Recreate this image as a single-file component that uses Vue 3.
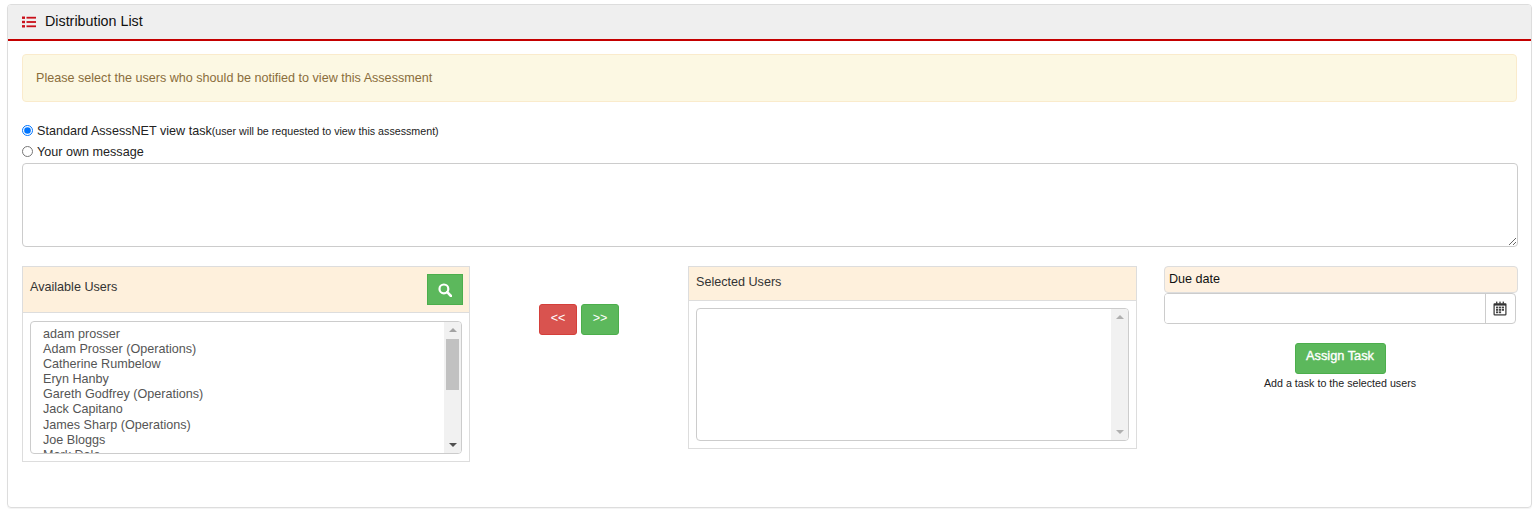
<script setup>
const users = [
  'adam prosser',
  'Adam Prosser (Operations)',
  'Catherine Rumbelow',
  'Eryn Hanby',
  'Gareth Godfrey (Operations)',
  'Jack Capitano',
  'James Sharp (Operations)',
  'Joe Bloggs',
  'Mark Dale'
]
</script>

<template>
  <div class="page">
    <section class="card">
      <header class="card-head">
        <svg class="list-icon" width="14" height="12" viewBox="0 0 14 12">
          <g fill="#c9101a">
            <rect x="0" y="0.5" width="3" height="2.4" />
            <rect x="0" y="4.8" width="3" height="2.4" />
            <rect x="0" y="9.1" width="3" height="2.4" />
            <rect x="4.5" y="0.8" width="9.5" height="1.8" />
            <rect x="4.5" y="5.1" width="9.5" height="1.8" />
            <rect x="4.5" y="9.4" width="9.5" height="1.8" />
          </g>
        </svg>
        <span class="card-title">Distribution List</span>
      </header>

      <div class="card-body">
        <div class="alert">Please select the users who should be notified to view this Assessment</div>

        <label class="radio-row first">
          <input type="radio" name="msg" checked />
          <span>Standard AssessNET view task</span><small>(user will be requested to view this assessment)</small>
        </label>
        <label class="radio-row">
          <input type="radio" name="msg" />
          <span>Your own message</span>
        </label>
        <textarea class="message"></textarea>

        <div class="columns">
          <div class="panel">
            <div class="panel-head tall">
              <span class="panel-title">Available Users</span>
              <button class="search-btn" type="button" aria-label="Search">
                <svg width="14" height="14" viewBox="0 0 14 14" fill="none" stroke="#fff">
                  <circle cx="5.9" cy="5.9" r="4.4" stroke-width="2.2" />
                  <path d="M9.2 9.2 13 13" stroke-width="2.6" stroke-linecap="round" />
                </svg>
              </button>
            </div>
            <div class="panel-body">
              <div class="listbox">
                <ul class="options">
                  <li v-for="u in users" :key="u">{{ u }}</li>
                </ul>
                <div class="scrollbar">
                  <i class="arrow up dark"></i>
                  <b class="thumb"></b>
                  <i class="arrow down darker"></i>
                </div>
              </div>
            </div>
          </div>

          <div class="movers">
            <button class="move red" type="button">&lt;&lt;</button>
            <button class="move green" type="button">&gt;&gt;</button>
          </div>

          <div class="panel">
            <div class="panel-head short">
              <span class="panel-title">Selected Users</span>
            </div>
            <div class="panel-body">
              <div class="listbox">
                <ul class="options"></ul>
                <div class="scrollbar">
                  <i class="arrow up"></i>
                  <i class="arrow down"></i>
                </div>
              </div>
            </div>
          </div>

          <div class="due">
            <div class="due-label">Due date</div>
            <div class="due-input">
              <input type="text" />
              <span class="addon">
                <svg width="14" height="15" viewBox="0 0 14 15">
                  <path d="M1.5 2.2h11a1 1 0 0 1 1 1v10a1.3 1.3 0 0 1-1.3 1.3H1.8A1.3 1.3 0 0 1 .5 13.2v-10a1 1 0 0 1 1-1Z" fill="#333" />
                  <rect x="1.7" y="4.6" width="10.6" height="8.7" fill="#fff" />
                  <g fill="#444">
                    <rect x="3" y="0.6" width="1.4" height="2.4" />
                    <rect x="6.3" y="0.6" width="1.4" height="2.4" />
                    <rect x="9.6" y="0.6" width="1.4" height="2.4" />
                    <rect x="3" y="5.6" width="2.2" height="1.8" />
                    <rect x="5.9" y="5.6" width="2.2" height="1.8" />
                    <rect x="8.8" y="5.6" width="2.2" height="1.8" />
                    <rect x="3" y="8" width="2.2" height="1.8" />
                    <rect x="5.9" y="8" width="2.2" height="1.8" />
                    <rect x="8.8" y="8" width="2.2" height="1.8" />
                    <rect x="3" y="10.4" width="2.2" height="1.8" />
                    <rect x="5.9" y="10.4" width="2.2" height="1.8" />
                  </g>
                </svg>
              </span>
            </div>
            <div class="assign">
              <button class="assign-btn" type="button">Assign Task</button>
              <p class="assign-note">Add a task to the selected users</p>
            </div>
          </div>
        </div>
      </div>
    </section>
  </div>
</template>

<style>
html, body { margin: 0; background: #fff; }
</style>

<style scoped>
.page {
  padding: 4px 3px 0 7px;
  height: 509px;
  box-sizing: border-box;
  font-family: "Liberation Sans", Arial, sans-serif;
  color: #333;
}
.card {
  width: 1525px;
  height: 504px;
  box-sizing: border-box;
  border: 1px solid #ddd;
  border-radius: 4px;
  box-shadow: 0 1px 1px rgba(0, 0, 0, .05);
  overflow: hidden;
}
.card-head {
  height: 36px;
  box-sizing: border-box;
  background: #efefef;
  border-bottom: 2px solid #c40000;
  display: flex;
  align-items: center;
  padding-left: 14px;
}
.list-icon { margin-right: 9px; }
.card-title { font-size: 14.3px; color: #111; margin-top: -2px; }
.card-body { padding: 13px 14px 0; }
.alert {
  height: 48px;
  box-sizing: border-box;
  background: #fcf8e3;
  border: 1px solid #faebcc;
  border-radius: 4px;
  color: #8a6d3b;
  font-size: 12.6px;
  line-height: 46px;
  padding-left: 13px;
}
.radio-row {
  display: flex;
  align-items: center;
  height: 21px;
  font-size: 12.6px;
  color: #222;
}
.radio-row.first { margin-top: 18px; }
.radio-row input {
  margin: 0 4px 0 0;
  width: 11px;
  height: 11px;
}
.radio-row small { font-size: 10.7px; margin-top: 1px; }
.message {
  display: block;
  width: 1496px;
  height: 84px;
  margin: 1px 0 0;
  box-sizing: border-box;
  border: 1px solid #ccc;
  border-radius: 4px;
  background: #fff;
}
.columns {
  display: grid;
  grid-template-columns: 448px 218px 449px 381px;
  margin-top: 19px;
  align-items: start;
}
.panel { border: 1px solid #ddd; }
.panel-head {
  background: #fef0dc;
  border-bottom: 1px solid #ddd;
  display: flex;
  justify-content: space-between;
  padding-left: 7px;
  box-sizing: border-box;
  font-size: 12.6px;
  color: #333;
}
.panel-head.tall { height: 46px; padding: 7px 6px 0 7px; }
.panel-head.short { height: 34px; padding-top: 8px; }
.panel-title { line-height: 14px; margin-top: 6px; }
.panel-head.short .panel-title { margin-top: 0; }
.search-btn {
  width: 36px;
  height: 31px;
  padding: 0;
  background: #5cb85c;
  border: 1px solid #4cae4c;
  display: flex;
  align-items: center;
  justify-content: center;
}
.panel-body { padding: 8px 7px 7px; }
.panel-head.short + .panel-body { padding-top: 7px; }
.listbox {
  display: flex;
  height: 133px;
  box-sizing: border-box;
  border: 1px solid #ccc;
  border-radius: 4px;
  overflow: hidden;
  background: #fff;
}
.options {
  flex: 1;
  list-style: none;
  margin: 0;
  padding: 5px 0 0 12px;
  font-size: 12.6px;
  line-height: 15.1px;
  color: #555;
  overflow: hidden;
}
.scrollbar {
  width: 17px;
  background: #f1f1f1;
  display: flex;
  flex-direction: column;
  justify-content: space-between;
  align-items: center;
  position: relative;
}
.arrow {
  width: 0;
  height: 0;
  margin: 6px 0;
  border-left: 4px solid transparent;
  border-right: 4px solid transparent;
}
.arrow.up { border-bottom: 4px solid #b0b0b0; }
.arrow.down { border-top: 4px solid #b0b0b0; }
.arrow.up.dark { border-bottom-color: #a3a3a3; }
.arrow.down.darker { border-top-color: #505050; }
.thumb {
  position: absolute;
  top: 17px;
  left: 2px;
  right: 2px;
  height: 51px;
  background: #c1c1c1;
}
.movers {
  display: flex;
  justify-content: center;
  gap: 4px;
  margin-top: 38px;
}
.move {
  width: 38px;
  height: 31px;
  padding: 0 0 4px;
  border-radius: 3px;
  color: #fff;
  font: 12.6px "Liberation Sans", Arial, sans-serif;
}
.move.red { background: #d9534f; border: 1px solid #d43f3a; }
.move.green { background: #5cb85c; border: 1px solid #4cae4c; }
.due { padding-left: 27px; }
.due-label {
  height: 27px;
  box-sizing: border-box;
  background: #fef1e1;
  border: 1px solid #ddd;
  border-radius: 4px;
  font-size: 12.6px;
  line-height: 25px;
  padding-left: 4px;
  color: #111;
}
.due-input {
  display: flex;
  width: 352px;
  height: 31px;
  box-sizing: border-box;
  border: 1px solid #ccc;
  border-radius: 4px;
  overflow: hidden;
}
.due-input input {
  flex: 1;
  min-width: 0;
  border: 0;
  outline: 0;
  padding: 0;
}
.addon {
  width: 30px;
  box-sizing: border-box;
  padding-right: 2px;
  border-left: 1px solid #ccc;
  display: flex;
  align-items: center;
  justify-content: center;
}
.assign {
  display: flex;
  flex-direction: column;
  align-items: center;
  margin-top: 19px;
  width: 352px;
}
.assign-btn {
  width: 91px;
  height: 31px;
  padding: 0 0 6px;
  background: #5cb85c;
  border: 1px solid #4cae4c;
  border-radius: 3px;
  color: #fff;
  font: 12.8px "Liberation Sans", Arial, sans-serif;
  -webkit-text-stroke: .35px #fff;
}
.assign-note {
  margin: 3px 0 0;
  font-size: 10.7px;
  line-height: 12px;
  color: #222;
}
</style>
